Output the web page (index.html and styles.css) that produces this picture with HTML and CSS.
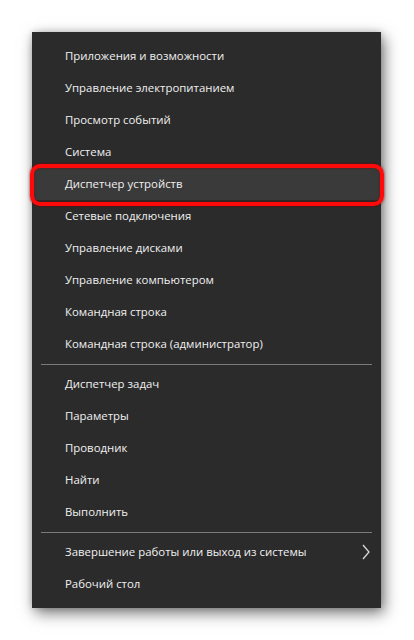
FILE: index.html
```html
<!DOCTYPE html>
<html lang="ru">
<head>
<meta charset="utf-8">
<link rel="stylesheet" href="styles.css">
</head>
<body>
<div class="menu">
  <div class="item">Приложения и возможности</div>
  <div class="item">Управление электропитанием</div>
  <div class="item">Просмотр событий</div>
  <div class="item">Система</div>
  <div class="item active">Диспетчер устройств</div>
  <div class="item">Сетевые подключения</div>
  <div class="item">Управление дисками</div>
  <div class="item">Управление компьютером</div>
  <div class="item">Командная строка</div>
  <div class="item">Командная строка (администратор)</div>
  <div class="sep"></div>
  <div class="item">Диспетчер задач</div>
  <div class="item">Параметры</div>
  <div class="item">Проводник</div>
  <div class="item">Найти</div>
  <div class="item">Выполнить</div>
  <div class="sep"></div>
  <div class="item sub">Завершение работы или выход из системы
    <svg class="chev" width="8" height="16" viewBox="0 0 8 16"><path d="M1 1 L7 8 L1 15" fill="none" stroke="#d8d8d8" stroke-width="1.3"/></svg>
  </div>
  <div class="item">Рабочий стол</div>
</div>
</body>
</html>
```
FILE: styles.css
```css
html, body {
  margin: 0;
  padding: 0;
  background: #ffffff;
}
body {
  padding: 32px;
  width: 414px;
  height: 640px;
  box-sizing: border-box;
}
.menu {
  width: 349px;
  height: 576px;
  box-sizing: border-box;
  background: #2b2b2b;
  padding: 8px 0;
  box-shadow: 3px 5px 14px rgba(0,0,0,0.55), 0 0 6px rgba(0,0,0,0.15);
  font-family: "Open Sans", "Noto Sans", sans-serif;
  font-size: 11.4px;
  color: #f0f0f0;
}
.item {
  height: 32px;
  box-sizing: border-box;
  padding-bottom: 1px;
  display: flex;
  align-items: center;
  padding-left: 33px;
  position: relative;
  white-space: nowrap;
}
.item.active {
  background: #3a3a3a;
}
.item.active::after {
  content: "";
  position: absolute;
  top: -4px;
  bottom: -6px;
  left: -2px;
  right: -3px;
  border: 4px solid #ff0a0a;
  border-radius: 10px;
  box-shadow: 0 0 3px rgba(120,0,0,0.8), inset 0 0 3px rgba(120,0,0,0.6);
}
.item.sub {
  justify-content: space-between;
  padding-right: 11px;
}
.chev {
  display: block;
}
.sep {
  height: 1px;
  background: #7a7a7a;
  margin: 4px 9px 3px 9px;
}
```
